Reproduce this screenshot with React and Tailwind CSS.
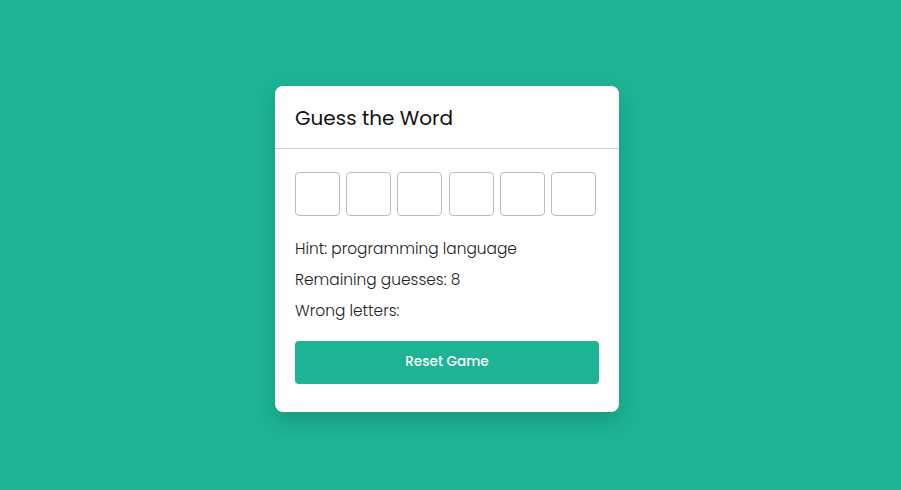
const letters = ['', '', '', '', '', ''];

export default function App() {
  return (
    <div
      className="min-h-[490px] w-full bg-[#1db394] flex items-center justify-center pr-[7px] pt-[8px]"
      style={{ fontFamily: 'Poppins, Inter, "Noto Sans", sans-serif' }}
    >
      <div className="w-[344px] bg-white rounded-[8px] shadow-[0_8px_20px_rgba(0,0,0,0.15)]">
        {/* Header */}
        <div className="h-[63px] px-5 flex items-center border-b border-[#cfcfcf]">
          <h1 className="text-[20px] text-[#111] font-normal pt-[1px]">Guess the Word</h1>
        </div>

        {/* Body */}
        <div className="px-5 pt-[23px] pb-[28px]">
          <div className="flex gap-[6.2px]">
            {letters.map((l, i) => (
              <div
                key={i}
                className="w-[45px] h-[44px] border border-[#bdbdbd] rounded-[4px] flex items-center justify-center text-lg"
              >
                {l}
              </div>
            ))}
          </div>

          <div className="mt-[17px] text-[15.4px] font-light text-[#222] leading-[31px]">
            <p>Hint: programming language</p>
            <p>Remaining guesses: 8</p>
            <p>Wrong letters: </p>
          </div>

          <button className="mt-[15px] w-full h-[43px] bg-[#1db394] text-white text-[13.6px] font-medium rounded-[4px]">
            Reset Game
          </button>
        </div>
      </div>
    </div>
  );
}
